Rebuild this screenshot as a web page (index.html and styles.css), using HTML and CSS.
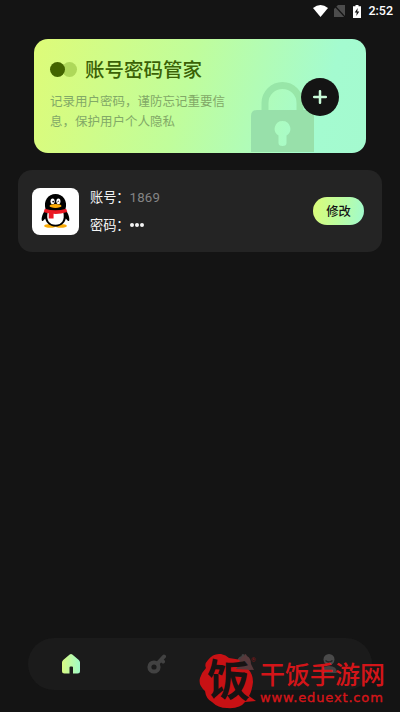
FILE: index.html
```html
<!DOCTYPE html>
<html lang="zh-CN">
<head>
<meta charset="utf-8">
<title>账号密码管家</title>
<link rel="stylesheet" href="styles.css">
</head>
<body>
<div class="app">
  <header class="status">
    <svg class="wifi" width="15" height="12" viewBox="0 0 15 12"><path d="M0 3Q7.500-3 15 3L7.500 12Z" fill="#fff"/></svg>
    <svg class="sim" width="11" height="12" viewBox="0 0 11 12"><path d="M4 0h7v12H0V4Z" fill="#4c4c4c"/><path d="M0 0l11 12" stroke="#141414" stroke-width="1.300"/></svg>
    <svg class="battery" width="8" height="13" viewBox="0 0 8 13"><path d="M2.500 0h3v1.300H8V13H0V1.300h2.500Z" fill="#fff"/><path d="M4.700 3L1.700 7.600h2L3.300 11l3-4.600h-2Z" fill="#141414"/></svg>
    <span class="time">2:52</span>
  </header>

  <section class="hero">
    <svg class="lock" width="63" height="70" viewBox="0 0 63 70">
      <path d="M14 30V21a17.500 17.500 0 0 1 35 0v9" fill="none" stroke="#98e6a8" stroke-width="7"/>
      <path fill-rule="evenodd" d="M6 28h51q6 0 6 6v36H0V34q0-6 6-6ZM31.500 39a7.800 7.800 0 0 0-4 14.500v7.500q0 3 4 3t4-3v-7.500a7.800 7.800 0 0 0-4-14.500Z" fill="#98e0aa"/>
    </svg>
    <div class="copy">
      <div class="brand"><i class="dot dark"></i><i class="dot light"></i><h1>账号密码管家</h1></div>
      <p>记录用户密码，谨防忘记重要信息，保护用户个人隐私</p>
    </div>
    <button class="add" aria-label="添加"><svg width="14" height="14" viewBox="0 0 14 14"><path d="M7 1.200v11.600M1.200 7h11.600" stroke="#c9fbd8" stroke-width="2.500" stroke-linecap="round"/></svg></button>
  </section>

  <section class="account">
    <div class="avatar">
      <svg width="29" height="34" viewBox="0 0 30 36" preserveAspectRatio="none">
        <ellipse cx="9.500" cy="33.800" rx="6.200" ry="2" fill="#faab07"/><ellipse cx="20.500" cy="33.800" rx="6.200" ry="2" fill="#faab07"/>
        <path d="M6 15C3 18 0 24 .8 28c.8 1.500 2.500-.5 3.500-2C5.500 31.500 10 34.500 15 34.500s9.500-3 10.700-8.500c1 1.500 2.700 3.500 3.500 2C30 24 27 18 24 15Z" fill="#000"/>
        <path d="M7 19h16c2 8.500-1.500 13.500-8 13.500S5 27.500 7 19Z" fill="#fff"/>
        <path d="M4.800 16.500C2 7 7.500 0 15 0s13 7 10.200 16.500Z" fill="#000"/>
        <ellipse cx="12" cy="7.700" rx="2.100" ry="3" fill="#fff"/><ellipse cx="18" cy="7.700" rx="2.100" ry="3" fill="#fff"/>
        <circle cx="12.600" cy="8" r=".9" fill="#000"/><path d="M17 8.500q.9-1.800 1.800 0" fill="none" stroke="#000" stroke-width=".9"/>
        <ellipse cx="15" cy="12.600" rx="6.200" ry="2.100" fill="#faab07"/>
        <path d="M4 15.500q11 3.500 22 0l1.200 3.600Q19 21.500 13 21V26H8v-5.500q-3-.5-5.200-1.500Z" fill="#eb1923"/>
      </svg>
    </div>
    <div class="fields">
      <div>账号：<span class="value">1869</span></div>
      <div>密码：<span class="mask"><i></i><i></i><i></i></span></div>
    </div>
    <button class="edit">修改</button>
  </section>

  <nav class="tabs">
    <div><svg width="18" height="20" viewBox="0 0 18 20">
      <defs><linearGradient id="g"><stop offset="0" stop-color="#d9fb82"/><stop offset="1" stop-color="#a0fac8"/></linearGradient></defs>
      <path d="M7.700.500Q9-.3 10.300.500L16.800 6Q18 7 18 8.500V17q0 2.500-2.500 2.500H11V13.500q0-1-1-1H8.500q-1 0-1 1v6h-5Q0 19.500 0 17V8.500Q0 7 1.200 6Z" fill="url(#g)"/></svg></div>
    <div><svg width="20" height="20" viewBox="0 0 20 20" fill="none" stroke="#424242" stroke-width="4" stroke-linecap="round"><circle cx="7" cy="13" r="4.600"/><path d="M11 9l6-6.500M14 6l2 1.500"/></svg></div>
    <div><svg width="16" height="20" viewBox="0 0 16 20"><path d="M8 0q1.500 0 1.500 2Q14 3.500 14 9v4l2 3H0l2-3V9q0-5.500 4.500-7Q6.500 0 8 0ZM5.500 17h5q-.5 2.500-2.500 2.500T5.500 17Z" fill="#424242"/></svg></div>
    <div><svg width="18" height="20" viewBox="0 0 18 20"><circle cx="9" cy="5.500" r="5.500" fill="#4a4a4a"/><path d="M5.500 6.500q3.500 3 7 0" fill="none" stroke="#242424" stroke-width="1.300"/><path d="M1 19q0-7 8-7t8 7Z" fill="#424242"/></svg></div>
  </nav>

  <div class="watermark">
    <div class="stamp">
      <svg width="57" height="57" viewBox="0 0 57 57"><path d="M9 8Q14 1 22 2q5 1 8 4 7 1 12 2 6 1 7 9 5 5 5 13-1 9-4 14L57 49 46 50Q41 57 28 56 19 56 13 50 7 47 6 39-1 33 1 26 3 20 7 16 5 12 9 8Z" fill="#c81114"/><path d="M37 17l3-4q0-8 5-9 1-4 3 0 4 2 4 8l3 6Z" fill="#57393b"/></svg>
      <span>饭</span><small>®</small>
    </div>
    <div class="words"><strong>干饭手游网</strong><span>www.eduext.com</span></div>
  </div>
</div>
</body>
</html>
```
FILE: styles.css
```css
* { box-sizing: border-box; }
body { margin: 0; background: #141414; font-family: Roboto, "Noto Sans CJK SC", sans-serif; }
button { border: 0; padding: 0; font-family: inherit; }
svg { display: block; }
h1, p { margin: 0; }
.app { position: relative; height: 712px; display: flex; flex-direction: column; overflow: hidden; }

.status { height: 22px; display: flex; align-items: center; justify-content: flex-end; padding-right: 7px; color: #fff; }
.sim { margin-left: 6px; }
.battery { margin-left: 8px; }
.time { margin-left: 7px; font-size: 12.5px; font-weight: 500; line-height: 22px; }

.hero { position: relative; height: 114px; margin: 17px 34px 0; padding: 17px 26px 0 16px; display: flex; justify-content: space-between; border-radius: 14px; background: linear-gradient(105deg, #defb78 0%, #c0fd9b 45%, #a4fbd0 85%, #a4facf 100%); overflow: hidden; }
.lock { position: absolute; left: 217px; bottom: 1px; }
.copy { width: 180px; }
.brand { height: 26px; display: flex; align-items: center; }
.dot { width: 15px; height: 15px; border-radius: 50%; }
.dark { position: relative; z-index: 1; background: #436400; }
.light { margin-left: -3px; background: #aed85a; }
h1 { margin-left: 8px; padding-top: 3px; font-size: 19.5px; line-height: 26px; font-weight: 500; color: #3b6206; white-space: nowrap; }
p { margin-top: 10px; font-size: 12.5px; line-height: 20px; color: #82a967; }
.add { position: relative; left: -1px; width: 38px; height: 38px; margin-top: 22px; border-radius: 50%; background: #141414; display: grid; place-items: center; }

.account { height: 82px; margin: 17px 18px 0; padding: 0 18px 0 14px; display: flex; align-items: center; border-radius: 14px; background: #242424; }
.avatar { width: 47px; height: 47px; border-radius: 8px; background: #fff; display: grid; place-items: center; }
.fields { margin-left: 11px; padding-top: 2px; flex: 1; color: #f4f4f4; font-size: 13.2px; line-height: 28px; }
.fields > div { display: flex; }
.value { color: #858585; letter-spacing: .2px; }
.mask { display: flex; align-items: center; gap: 1px; }
.mask i { width: 4px; height: 4px; margin-top: -2px; border-radius: 50%; background: #f4f4f4; }
.edit { width: 51px; height: 28px; padding-top: 2px; border-radius: 14px; background: linear-gradient(100deg, #dcfb78, #bdfd9e 50%, #a0fad0); color: #141414; font-size: 12.3px; font-weight: 500; line-height: 26px; }

.tabs { height: 52px; margin: auto 28px 22px; display: grid; grid-template-columns: repeat(4, 1fr); align-items: center; border-radius: 26px; background: #1b1b1b; }
.tabs > div { display: grid; place-items: center; }

.watermark { position: absolute; left: 199px; top: 652px; display: flex; color: #d31519; }
.stamp { position: relative; width: 57px; height: 57px; }
.stamp span { position: absolute; left: 8px; top: 7px; font-size: 43px; line-height: 44px; font-weight: 700; color: #171313; transform: skewY(4deg); }
.stamp small { position: absolute; left: 52px; top: 4px; font-size: 6px; line-height: 8px; color: #8b1719; }
.words { margin-left: 4px; display: flex; flex-direction: column; white-space: nowrap; }
.words strong { margin-top: 10px; font-size: 25px; line-height: 28px; font-weight: 500; }
.words span { font: 13px/15px "DejaVu Sans", sans-serif; letter-spacing: .85px; -webkit-text-stroke: .4px #d31519; }
```
